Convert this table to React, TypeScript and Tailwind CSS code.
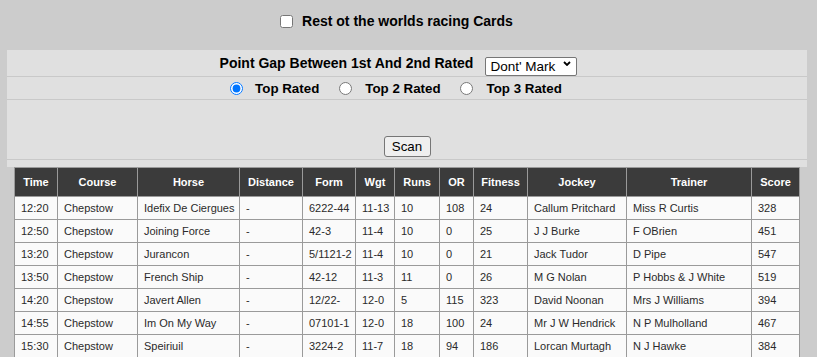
import React from "react";

const rows = [
  ["12:20", "Chepstow", "Idefix De Ciergues", "-", "6222-44", "11-13", "10", "108", "24", "Callum Pritchard", "Miss R Curtis", "328"],
  ["12:50", "Chepstow", "Joining Force", "-", "42-3", "11-4", "10", "0", "25", "J J Burke", "F OBrien", "451"],
  ["13:20", "Chepstow", "Jurancon", "-", "5/1121-2", "11-4", "10", "0", "21", "Jack Tudor", "D Pipe", "547"],
  ["13:50", "Chepstow", "French Ship", "-", "42-12", "11-3", "11", "0", "26", "M G Nolan", "P Hobbs & J White", "519"],
  ["14:20", "Chepstow", "Javert Allen", "-", "12/22-", "12-0", "5", "115", "323", "David Noonan", "Mrs J Williams", "394"],
  ["14:55", "Chepstow", "Im On My Way", "-", "07101-1", "12-0", "18", "100", "24", "Mr J W Hendrick", "N P Mulholland", "467"],
  ["15:30", "Chepstow", "Speiriuil", "-", "3224-2", "11-7", "18", "94", "186", "Lorcan Murtagh", "N J Hawke", "384"],
];

const headers = ["Time", "Course", "Horse", "Distance", "Form", "Wgt", "Runs", "OR", "Fitness", "Jockey", "Trainer", "Score"];

const colClasses = [
  "w-[43px]",
  "w-[80px]",
  "w-[102px]",
  "w-[63px]",
  "w-[53px]",
  "w-[39px]",
  "w-[45px]",
  "w-[34px]",
  "w-[54px]",
  "w-[99px]",
  "w-[125px]",
  "w-[48px]",
];

export default function App() {
  return (
    <div className="min-h-screen bg-[#cccccc] font-['Liberation_Sans',Arial,sans-serif] text-black">
      {/* top checkbox */}
      <div className="h-[50px] pt-[13px] flex items-start justify-center pr-[24px]">
        <label className="flex items-center leading-[16px] text-[14px] font-bold">
          <input type="checkbox" className="m-0 w-[13px] h-[13px]" />
          <span className="ml-[9px]">Rest ot the worlds racing Cards</span>
        </label>
      </div>

      {/* control panel */}
      <div className="ml-[7px] w-[800px] bg-[#e0e0e0]">
        <div className="h-[27px] border-b border-[#c9c9c9] flex items-center justify-center pr-[17px]">
          <span className="text-[14px] font-bold leading-[16px]">Point Gap Between 1st And 2nd Rated</span>
          <div className="relative ml-[12px] w-[92px] h-[19px]">
            <select className="appearance-none w-[92px] h-[19px] bg-white border border-[#767676] rounded-[2px] pl-[4px] text-[13.5px] leading-[17px] text-black font-['Liberation_Sans',Arial,sans-serif]">
              <option>Dont' Mark</option>
            </select>
            <svg className="absolute right-[6px] top-[7px] pointer-events-none" width="8" height="5" viewBox="0 0 8 5">
              <path d="M1 1 L4 4 L7 1" fill="none" stroke="#000" strokeWidth="1.8" />
            </svg>
          </div>
        </div>
        <div className="h-[23px] border-b border-[#c9c9c9] flex items-center justify-center pr-[22px] text-[13.333px] font-bold leading-[15px]">
          <input type="radio" name="rated" defaultChecked className="m-0 w-[13px] h-[13px]" />
          <span className="ml-[12px]">Top Rated</span>
          <input type="radio" name="rated" className="m-0 ml-[20px] w-[13px] h-[13px]" />
          <span className="ml-[13px]">Top 2 Rated</span>
          <input type="radio" name="rated" className="m-0 ml-[19px] w-[13px] h-[13px]" />
          <span className="ml-[14px]">Top 3 Rated</span>
        </div>
        <div className="h-[60px] border-b border-[#c9c9c9] flex items-end justify-center pb-[2px]">
          <button className="w-[47px] h-[21px] bg-[#efefef] border border-[#767676] rounded-[3px] text-[13.333px] leading-[15px] text-black font-['Liberation_Sans',Arial,sans-serif]">
            Scan
          </button>
        </div>
        <div className="h-[7px]" />
      </div>

      {/* results table */}
      <div className="pl-[14px]">
        <table className="table-fixed border-collapse w-[786px] text-[11px]">
          <colgroup>
            {colClasses.map((c, i) => (
              <col key={i} className={c} />
            ))}
          </colgroup>
          <thead>
            <tr>
              {headers.map((h) => (
                <th
                  key={h}
                  className="h-[29px] border border-[#9a9a9a] bg-[#3b3b3b] text-white font-bold text-center p-0 leading-[13px]"
                >
                  {h}
                </th>
              ))}
            </tr>
          </thead>
          <tbody>
            {rows.map((r, i) => (
              <tr key={i}>
                {r.map((c, j) => (
                  <td
                    key={j}
                    className="h-[23px] border border-[#9a9a9a] bg-[#fafafa] text-[#2a2a2a] text-left pl-[6px] pr-0 py-0 leading-[13px] whitespace-nowrap overflow-hidden"
                  >
                    {c}
                  </td>
                ))}
              </tr>
            ))}
          </tbody>
        </table>
      </div>
    </div>
  );
}
